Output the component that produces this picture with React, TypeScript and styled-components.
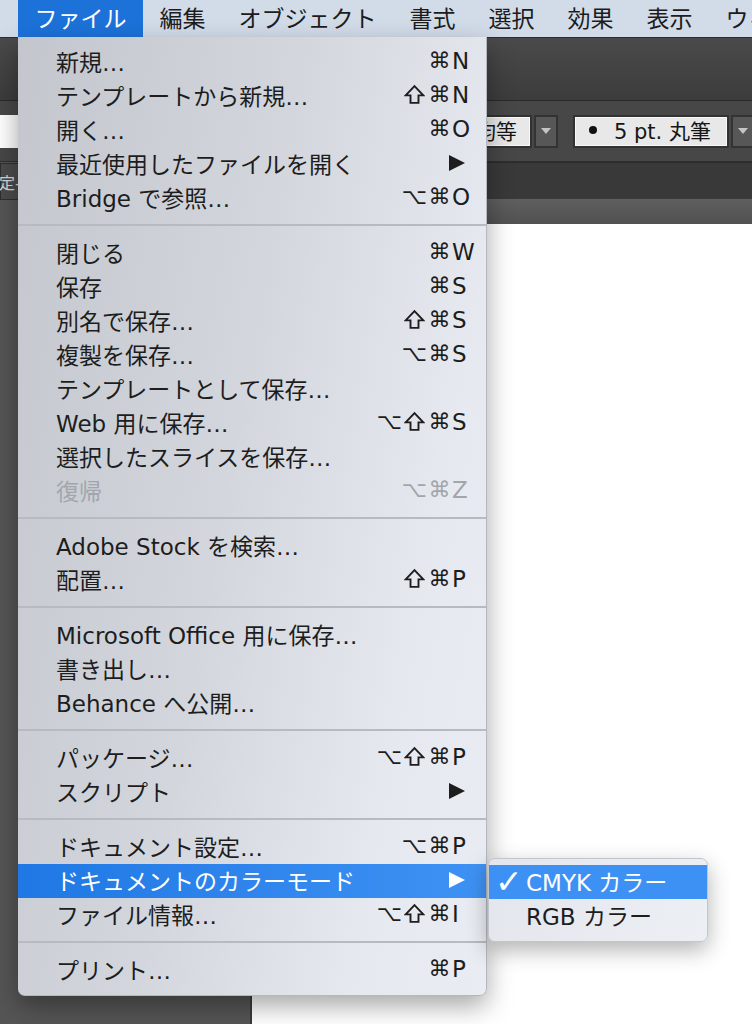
import styled, { createGlobalStyle } from "styled-components";

const GlobalStyle = createGlobalStyle`
  html, body {
    margin: 0;
    padding: 0;
    background: #ffffff;
  }
  body {
    font-family: "DejaVu Sans", "Noto Sans CJK JP", sans-serif;
  }
`;

const Screen = styled.div`
  position: relative;
  width: 752px;
  height: 1024px;
  overflow: hidden;
  display: flex;
  flex-direction: column;
  background: #ffffff;
`;

/* ---------- menu bar ---------- */

const MenuBar = styled.div`
  flex: none;
  height: 37px;
  display: flex;
  padding-left: 18px;
  background: #d2dbe8;
  overflow: hidden;
`;

const MenuTitle = styled.div<{ $active?: boolean }>`
  flex: none;
  display: flex;
  align-items: center;
  box-sizing: border-box;
  padding: 0 16.5px 4px;
  font-size: 23px;
  white-space: nowrap;
  color: ${(p) => (p.$active ? "#ffffff" : "#1c1c1c")};
  background: ${(p) => (p.$active ? "#1c72d9" : "transparent")};
`;

/* ---------- the app behind the menu ---------- */

const Workspace = styled.div`
  flex: 1;
  display: flex;
  flex-direction: column;
  border-top: 1px solid #262e40;
`;

const TopBar = styled.div`
  flex: none;
  height: 62px;
  background: linear-gradient(#4a4a4a, #3c3c3c);
  border-bottom: 1px solid #2a2a2a;
`;

const ControlBar = styled.div`
  flex: none;
  height: 60px;
  display: flex;
  align-items: center;
  background: #474747;
  border-bottom: 1px solid #2e2e2e;
  overflow: hidden;
`;

const WhiteField = styled.div`
  flex: none;
  width: 230px;
  height: 33px;
  background: linear-gradient(to right, #ffffff, #e4e4e4);
`;

const SelectGroup = styled.div<{ $offset: number }>`
  flex: none;
  display: flex;
  gap: 2px;
  margin-left: ${(p) => p.$offset}px;
`;

const SelectField = styled.div<{ $w: number; $align?: string }>`
  box-sizing: border-box;
  width: ${(p) => p.$w}px;
  height: 33px;
  display: flex;
  align-items: center;
  justify-content: ${(p) => p.$align || "flex-start"};
  padding: 0 13px 2px 14px;
  background: #e8e8e8;
  border: 2px solid #323232;
  box-shadow: inset 0 0 0 1px #f8f8f8;
  font-size: 21px;
  color: #151515;
  white-space: nowrap;
`;

const Bullet = styled.span`
  display: inline-block;
  width: 8px;
  height: 8px;
  border-radius: 50%;
  background: #111;
  margin-right: 17px;
`;

const DropButton = styled.div`
  box-sizing: border-box;
  width: 24px;
  height: 33px;
  display: flex;
  align-items: center;
  justify-content: center;
  background: #575757;
  border: 2px solid #333;

  &::after {
    content: "";
    border-left: 5px solid transparent;
    border-right: 5px solid transparent;
    border-top: 6px solid #c4c4c4;
  }
`;

const MainArea = styled.div`
  flex: 1;
  display: flex;
`;

const LeftPanel = styled.div`
  flex: none;
  width: 250px;
  display: flex;
  flex-direction: column;
  background: #555555;
  border-right: 2px solid #3a3a3a;
`;

const PanelTab = styled.div`
  height: 35px;
  display: flex;
  align-items: center;
  margin-top: 1px;
  background: #4b4b4b;
  border: 1px solid #2f2f2f;
  font-size: 16px;
  color: #d6d6d6;
  text-indent: -2px;
`;

const RightColumn = styled.div`
  flex: 1;
  display: flex;
  flex-direction: column;
`;

const DarkBand = styled.div`
  height: 36px;
  background: #393939;
  border-top: 1px solid #2c2c2c;
`;

const DocTabs = styled.div`
  height: 25px;
  background: linear-gradient(#5f5f5f, #515151);
`;

const Canvas = styled.div`
  flex: 1;
  background: #ffffff;
`;

/* ---------- dropdown menu ---------- */

const MenuPanel = styled.div`
  position: absolute;
  top: 37px;
  left: 18px;
  width: 469px;
  box-sizing: border-box;
  padding: 8px 0;
  border-radius: 0 0 7px 7px;
  background: linear-gradient(100deg, #c3c7cd 0%, #d3d7dd 45%, #e6e9ef 80%, #e9ecf2 100%);
  border-right: 1px solid #b4b8be;
  border-bottom: 1px solid #b4b8be;
  box-shadow: 0 10px 26px rgba(0, 0, 0, 0.35);
`;

const Row = styled.div<{ $active?: boolean; $disabled?: boolean }>`
  box-sizing: border-box;
  height: 34px;
  display: flex;
  align-items: center;
  padding: 0 12px 3px 38px;
  font-size: 23px;
  white-space: nowrap;
  color: ${(p) => (p.$active ? "#ffffff" : p.$disabled ? "#a2a6ac" : "#1d1d1d")};
  background: ${(p) =>
    p.$active ? "linear-gradient(to right, #1f78e4, #3f92f4)" : "transparent"};
`;

const Label = styled.span`
  flex: 1;
`;

const Mods = styled.span`
  display: flex;
  align-items: center;
  justify-content: flex-end;
`;

const ModKey = styled.span`
  width: 25px;
  display: flex;
  justify-content: center;
  font-size: 22px;
`;

const KeyCell = styled.span`
  width: 22px;
  font-size: 23px;
`;

const SubArrow = styled.span`
  width: 22px;
  display: flex;

  &::before {
    content: "";
    margin-left: -3px;
    border-top: 8px solid transparent;
    border-bottom: 8px solid transparent;
    border-left: 16px solid currentColor;
  }
`;

const Separator = styled.div`
  height: 2px;
  margin: 9px 0 10px;
  background: #b7bbc1;
`;

/* ---------- submenu ---------- */

const SubMenu = styled.div`
  position: absolute;
  top: 858px;
  left: 488px;
  width: 220px;
  box-sizing: border-box;
  padding: 6px 0 8px;
  border-radius: 7px;
  background: linear-gradient(100deg, #e3e6ec, #eceff4);
  border: 1px solid #c2c5ca;
  box-shadow: 0 8px 22px rgba(0, 0, 0, 0.3);
`;

const SubRow = styled.div<{ $active?: boolean }>`
  box-sizing: border-box;
  height: 34px;
  display: flex;
  align-items: center;
  padding: 0 0 3px 6px;
  font-size: 23px;
  white-space: nowrap;
  color: ${(p) => (p.$active ? "#ffffff" : "#1d1d1d")};
  background: ${(p) => (p.$active ? "#3d91f4" : "transparent")};
`;

const Check = styled.span`
  width: 31px;
  font-weight: bold;
  font-size: 33px;
  line-height: 1;
  margin-top: 2px;
`;

const ShiftIcon = () => (
  <svg width="21" height="21" viewBox="0 0 20 20">
    <path
      d="M10 2 L18.4 10.8 H13.8 V18 H6.2 V10.8 H1.6 Z"
      fill="none"
      stroke="currentColor"
      strokeWidth="1.8"
    />
  </svg>
);

type Item =
  | { sep: true }
  | {
      sep?: false;
      label: string;
      mods?: string;
      k?: string;
      sub?: boolean;
      active?: boolean;
      disabled?: boolean;
    };

const items: Item[] = [
  { label: "新規…", mods: "⌘", k: "N" },
  { label: "テンプレートから新規…", mods: "⇧⌘", k: "N" },
  { label: "開く…", mods: "⌘", k: "O" },
  { label: "最近使用したファイルを開く", sub: true },
  { label: "Bridge で参照…", mods: "⌥⌘", k: "O" },
  { sep: true },
  { label: "閉じる", mods: "⌘", k: "W" },
  { label: "保存", mods: "⌘", k: "S" },
  { label: "別名で保存…", mods: "⇧⌘", k: "S" },
  { label: "複製を保存…", mods: "⌥⌘", k: "S" },
  { label: "テンプレートとして保存…" },
  { label: "Web 用に保存…", mods: "⌥⇧⌘", k: "S" },
  { label: "選択したスライスを保存…" },
  { label: "復帰", mods: "⌥⌘", k: "Z", disabled: true },
  { sep: true },
  { label: "Adobe Stock を検索…" },
  { label: "配置…", mods: "⇧⌘", k: "P" },
  { sep: true },
  { label: "Microsoft Office 用に保存…" },
  { label: "書き出し…" },
  { label: "Behance へ公開…" },
  { sep: true },
  { label: "パッケージ…", mods: "⌥⇧⌘", k: "P" },
  { label: "スクリプト", sub: true },
  { sep: true },
  { label: "ドキュメント設定…", mods: "⌥⌘", k: "P" },
  { label: "ドキュメントのカラーモード", sub: true, active: true },
  { label: "ファイル情報…", mods: "⌥⇧⌘", k: "I" },
  { sep: true },
  { label: "プリント…", mods: "⌘", k: "P" },
];

const titles = ["ファイル", "編集", "オブジェクト", "書式", "選択", "効果", "表示", "ウィンドウ"];

export default function App() {
  return (
    <Screen>
      <GlobalStyle />
      <MenuBar>
        {titles.map((t, i) => (
          <MenuTitle key={t} $active={i === 0}>
            {t}
          </MenuTitle>
        ))}
      </MenuBar>

      <Workspace>
        <TopBar />
        <ControlBar>
          <WhiteField />
          <SelectGroup $offset={190}>
            <SelectField $w={112} $align="flex-end">均等</SelectField>
            <DropButton />
          </SelectGroup>
          <SelectGroup $offset={15}>
            <SelectField $w={156}>
              <Bullet />5 pt. 丸筆
            </SelectField>
            <DropButton />
          </SelectGroup>
        </ControlBar>
        <MainArea>
          <LeftPanel>
            <PanelTab>定-</PanelTab>
          </LeftPanel>
          <RightColumn>
            <DarkBand />
            <DocTabs />
            <Canvas />
          </RightColumn>
        </MainArea>
      </Workspace>

      <MenuPanel>
        {items.map((it, i) =>
          it.sep ? (
            <Separator key={i} />
          ) : (
            <Row key={i} $active={it.active} $disabled={it.disabled}>
              <Label>{it.label}</Label>
              {it.mods && (
                <Mods>
                  {Array.from(it.mods).map((m, j) => (
                    <ModKey key={j}>{m === "⇧" ? <ShiftIcon /> : m}</ModKey>
                  ))}
                </Mods>
              )}
              {it.k && <KeyCell>{it.k}</KeyCell>}
              {it.sub && <SubArrow />}
            </Row>
          )
        )}
      </MenuPanel>

      <SubMenu>
        <SubRow $active>
          <Check>✓</Check>CMYK カラー
        </SubRow>
        <SubRow>
          <Check />RGB カラー
        </SubRow>
      </SubMenu>
    </Screen>
  );
}
